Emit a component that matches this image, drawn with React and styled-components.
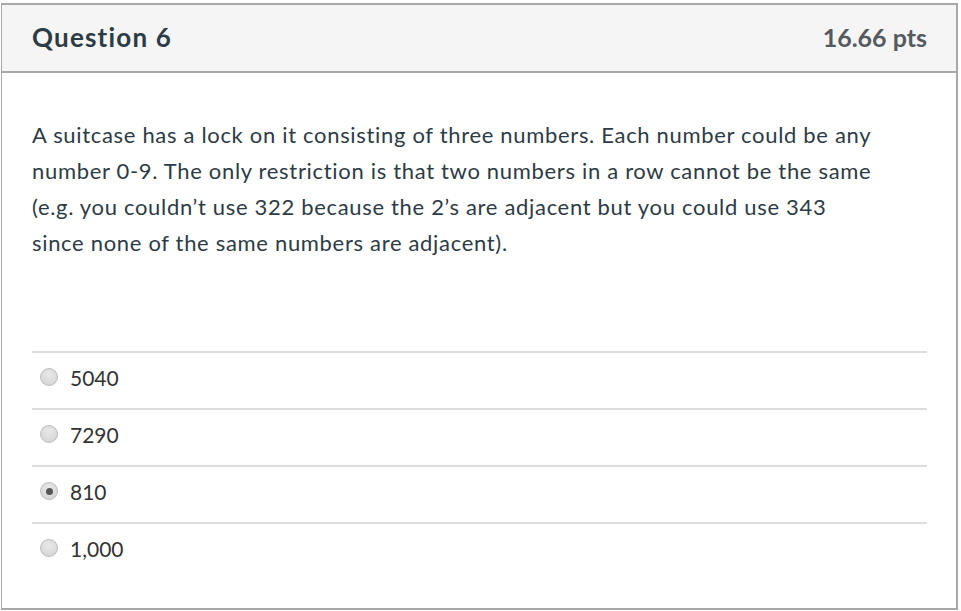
import React from "react";
import styled, { createGlobalStyle } from "styled-components";

const GlobalStyle = createGlobalStyle`
  html, body {
    margin: 0;
    padding: 0;
    background: #fff;
  }
  body {
    font-family: "Lato", "Open Sans", sans-serif;
    font-variant-ligatures: none;
  }
`;

const Page = styled.div`
  padding: 3px 3px 0 1px;
`;

const Card = styled.div`
  border: 2px solid #a8a8a8;
  border-left-width: 1px;
  height: 607px;
  box-sizing: border-box;
  display: flex;
  flex-direction: column;
`;

const Header = styled.div`
  display: flex;
  align-items: center;
  justify-content: space-between;
  background: #f5f5f5;
  border-bottom: 2px solid #a8a8a8;
  height: 68px;
  box-sizing: border-box;
  padding: 0 29px 3px 30px;
`;

const Title = styled.h2`
  margin: 0;
  font-size: 26px;
  font-weight: 700;
  letter-spacing: 1.2px;
  color: #2d3b45;
`;

const Points = styled.span`
  font-size: 25px;
  font-weight: 700;
  color: #555a5f;
`;

const Body = styled.div`
  padding: 44px 29px 0 30px;
`;

const Prompt = styled.p`
  margin: 0 0 90px;
  max-width: 848px;
  font-size: 22px;
  line-height: 36px;
  letter-spacing: 0.68px;
  color: #2d3b45;
`;

const Answers = styled.div`
  display: flex;
  flex-direction: column;
`;

const AnswerRow = styled.label`
  display: flex;
  align-items: center;
  gap: 12px;
  height: 57px;
  box-sizing: border-box;
  border-top: 2px solid #ddd;
  padding: 0 0 7px 8px;
  font-size: 21px;
  color: #333;
`;

const Radio = styled.span`
  width: 18px;
  height: 18px;
  border-radius: 50%;
  box-sizing: border-box;
  border: 1px solid #bcbcbc;
  background: radial-gradient(circle at 50% 35%, #e8e8e8 0%, #d2d2d2 100%);
  display: flex;
  align-items: center;
  justify-content: center;
  &::after {
    content: "";
    width: 7px;
    height: 7px;
    border-radius: 50%;
    background: #555;
    display: ${(p) => (p.checked ? "block" : "none")};
  }
`;

const answers = [
  { label: "5040" },
  { label: "7290" },
  { label: "810", checked: true },
  { label: "1,000" },
];

export default function App() {
  return (
    <Page>
      <GlobalStyle />
      <Card>
        <Header>
          <Title>Question 6</Title>
          <Points>16.66 pts</Points>
        </Header>
        <Body>
          <Prompt>
            A suitcase has a lock on it consisting of three numbers. Each number
            could be any number 0-9. The only restriction is that two numbers in
            a row cannot be the same (e.g. you couldn’t use 322 because the 2’s
            are adjacent but you could use 343 since none of the same numbers
            are adjacent).
          </Prompt>
          <Answers>
            {answers.map((a) => (
              <AnswerRow key={a.label}>
                <Radio checked={a.checked} />
                {a.label}
              </AnswerRow>
            ))}
          </Answers>
        </Body>
      </Card>
    </Page>
  );
}
